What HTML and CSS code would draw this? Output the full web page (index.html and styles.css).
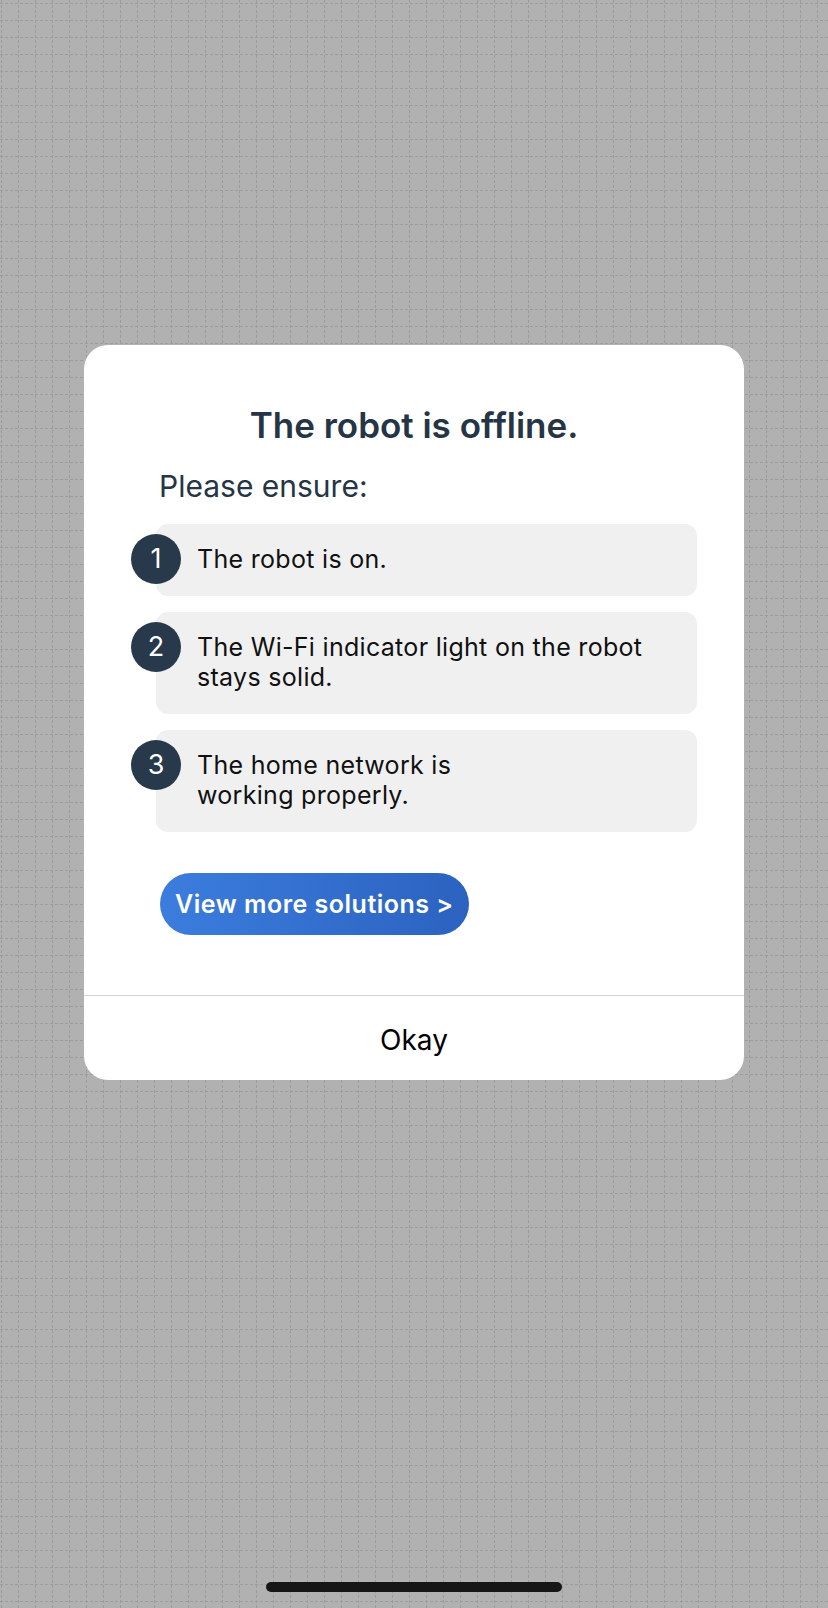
FILE: index.html
```html
<!DOCTYPE html>
<html>
<head>
	<title>Robot offline</title>
	<link rel="stylesheet" href="styles.css">
</head>
<body>
	<div class="dialog">
		<div class="dialog-body">
			<h1 class="title">The robot is offline.</h1>
			<p class="lead">Please ensure:</p>
			<ol class="checks">
				<li class="check"><span class="num">1</span>The robot is on.</li>
				<li class="check"><span class="num">2</span>The Wi-Fi indicator light on the robot stays solid.</li>
				<li class="check"><span class="num">3</span>The home network is<br>working properly.</li>
			</ol>
			<a class="more" href="#">View more solutions &gt;</a>
		</div>
		<div class="dialog-foot">Okay</div>
	</div>
	<div class="home-bar"></div>
</body>
</html>
```

FILE: styles.css
```css
body {
	margin: 0;
	height: 1608px;
	overflow: hidden;
	font-family: Inter, "Noto Sans", sans-serif;
	/* dashed 17px grid */
	background-color: #b1b1b1;
	background-image:
		conic-gradient(from 270deg at 1px 3px, #9c9c9c 90deg, transparent 0),
		conic-gradient(from 270deg at 3px 1px, #9c9c9c 90deg, transparent 0);
	background-size: 17px 5px, 5px 17px;
	background-position: 1px 0, 0 3px;
}

.dialog {
	width: 660px;
	margin: 345px auto 0;
	background: #fff;
	border-radius: 24px;
	overflow: hidden;
}

.dialog-body {
	padding: 59px 47px 60px 72px;
}

.title {
	margin: 0 0 22px -25px;
	text-align: center;
	font-size: 35px;
	line-height: 42px;
	font-weight: 600;
	color: #253545;
}

.lead {
	margin: 0 0 20px 3px;
	font-size: 30px;
	line-height: 36px;
	color: #253545;
}

.checks {
	list-style: none;
	margin: 0;
	padding: 0;
	display: flex;
	flex-direction: column;
	gap: 16px;
}

.check {
	position: relative;
	background: #f0f0f0;
	border-radius: 12px;
	padding: 20px 30px 22px 41px;
	font-size: 25px;
	line-height: 30px;
	letter-spacing: 0.3px;
	color: #111;
}

.num {
	position: absolute;
	left: -25px;
	top: 10px;
	width: 50px;
	height: 50px;
	border-radius: 50%;
	background: #27394a;
	color: #fff;
	font-size: 27px;
	font-weight: 400;
	line-height: 50px;
	letter-spacing: 0;
	text-align: center;
}

.more {
	display: inline-block;
	margin: 41px 0 0 4px;
	height: 62px;
	padding: 0 15px;
	border-radius: 31px;
	background: linear-gradient(to right, #3b7ddd, #2c62c0);
	color: #fff;
	font-size: 25px;
	font-weight: 600;
	line-height: 62px;
	letter-spacing: 0.5px;
	text-decoration: none;
}

.dialog-foot {
	border-top: 1px solid #d4d4d4;
	height: 84px;
	line-height: 88px;
	text-align: center;
	font-size: 28px;
	color: #000;
}

.home-bar {
	position: fixed;
	left: 266px;
	bottom: 16px;
	width: 296px;
	height: 10px;
	border-radius: 5px;
	background: #161616;
}
```
